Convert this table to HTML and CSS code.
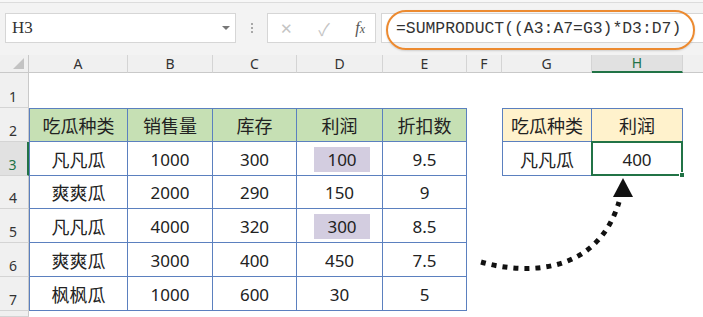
FILE: index.html
```html
<!DOCTYPE html>
<html lang="zh">
<head>
<meta charset="utf-8">
<link rel="stylesheet" href="styles.css">
</head>
<body>
<div class="app">
  <div class="topline"></div>
  <div class="toolbar">
    <div class="namebox"><span class="nb-text">H3</span><span class="nb-arrow"></span></div>
    <div class="grip"><i></i><i></i><i></i></div>
    <div class="btnbox">
      <span class="btn x">✕</span>
      <span class="btn ok">✓</span>
      <span class="btn fx"><i>f</i><i class="sx">x</i></span>
    </div>
    <div class="formula">=SUMPRODUCT((A3:A7=G3)*D3:D7)</div>
  </div>
  <div class="oval"></div>

  <div class="sheet">
    <!-- column headers -->
    <div class="corner"><span class="tri"></span></div>
    <div class="ch">A</div><div class="ch">B</div><div class="ch">C</div><div class="ch">D</div><div class="ch">E</div><div class="ch">F</div><div class="ch">G</div><div class="ch sel">H</div><div class="ch last"></div>

    <!-- row 1 -->
    <div class="rh">1</div>
    <div class="c"></div><div class="c"></div><div class="c"></div><div class="c"></div><div class="c"></div><div class="c"></div><div class="c"></div><div class="c"></div><div class="c"></div>

    <!-- row 2 -->
    <div class="rh">2</div>
    <div class="c t tt tl hg">吃瓜种类</div><div class="c t tt hg">销售量</div><div class="c t tt hg">库存</div><div class="c t tt hg">利润</div><div class="c t tt hg">折扣数</div>
    <div class="c"></div>
    <div class="c t tt tl hy">吃瓜种类</div><div class="c t tt hy">利润</div>
    <div class="c"></div>

    <!-- row 3 -->
    <div class="rh sel">3</div>
    <div class="c t tl">凡凡瓜</div><div class="c t num">1000</div><div class="c t num">300</div><div class="c t num"><span class="hl">100</span></div><div class="c t num">9.5</div>
    <div class="c"></div>
    <div class="c t tl">凡凡瓜</div><div class="c t num active">400<span class="handle"></span></div>
    <div class="c"></div>

    <!-- row 4 -->
    <div class="rh">4</div>
    <div class="c t tl">爽爽瓜</div><div class="c t num">2000</div><div class="c t num">290</div><div class="c t num">150</div><div class="c t num">9</div>
    <div class="c"></div><div class="c"></div><div class="c"></div><div class="c"></div>

    <!-- row 5 -->
    <div class="rh">5</div>
    <div class="c t tl">凡凡瓜</div><div class="c t num">4000</div><div class="c t num">320</div><div class="c t num"><span class="hl hl2">300</span></div><div class="c t num">8.5</div>
    <div class="c"></div><div class="c"></div><div class="c"></div><div class="c"></div>

    <!-- row 6 -->
    <div class="rh">6</div>
    <div class="c t tl">爽爽瓜</div><div class="c t num">3000</div><div class="c t num">400</div><div class="c t num">450</div><div class="c t num">7.5</div>
    <div class="c"></div><div class="c"></div><div class="c"></div><div class="c"></div>

    <!-- row 7 -->
    <div class="rh">7</div>
    <div class="c t tl">枫枫瓜</div><div class="c t num">1000</div><div class="c t num">600</div><div class="c t num">30</div><div class="c t num">5</div>
    <div class="c"></div><div class="c"></div><div class="c"></div><div class="c"></div>

    <!-- row 8 (partial) -->
    <div class="rh"></div>
    <div class="c"></div><div class="c"></div><div class="c"></div><div class="c"></div><div class="c"></div><div class="c"></div><div class="c"></div><div class="c"></div><div class="c"></div>
  </div>

  <svg class="arrow" width="703" height="317" viewBox="0 0 703 317">
    <path d="M481 262 C 530 276 598 272 619 202" fill="none" stroke="#111" stroke-width="5" stroke-dasharray="5 6"/>
    <polygon points="623,178 613,197 633,197" fill="#111"/>
  </svg>
</div>
</body>
</html>
```

FILE: styles.css
```css
* { box-sizing: border-box; }
html, body { margin: 0; padding: 0; }
body {
  width: 703px;
  height: 317px;
  overflow: hidden;
  background: #fff;
  font-family: "Noto Sans", "Noto Sans CJK SC", sans-serif;
  color: #222;
}
.app {
  position: relative;
  width: 703px;
  height: 317px;
  overflow: hidden;
}
.topline {
  height: 3px;
  background: #f7f7f7;
  border-bottom: 1px solid #dcdcdc;
}
.toolbar {
  height: 52px;
  background: #f3f3f3;
  display: flex;
  align-items: flex-start;
  padding-top: 10px;
  padding-left: 5px;
}
.namebox {
  width: 231px;
  height: 30px;
  background: #fff;
  border: 1px solid #d6d6d6;
  display: flex;
  align-items: center;
  justify-content: space-between;
  padding: 0 5px 0 6px;
}
.nb-text {
  font-family: "Liberation Serif", serif;
  font-size: 17px;
  color: #333;
}
.nb-arrow {
  width: 0; height: 0;
  border-left: 4px solid transparent;
  border-right: 4px solid transparent;
  border-top: 4px solid #777;
}
.grip {
  width: 31px;
  height: 30px;
  display: flex;
  flex-direction: column;
  align-items: center;
  justify-content: center;
  gap: 2px;
}
.grip i {
  width: 2px; height: 2px;
  background: #a8a8a8;
  display: block;
}
.btnbox {
  width: 109px;
  height: 30px;
  background: #fff;
  border: 1px solid #d6d6d6;
  display: flex;
  align-items: center;
  padding: 0 8px 0 12px;
  justify-content: space-between;
}
.btn { font-size: 16px; color: #c4c4c4; }
.btn.x { font-size: 15px; }
.btn.ok { font-size: 17px; }
.btn.fx {
  font-family: "Liberation Serif", serif;
  font-style: italic;
  color: #555;
  font-size: 16px;
  padding-right: 2px;
}
.btn.fx .sx { font-size: 12px; }
.formula {
  margin-left: 5px;
  flex: 1;
  height: 30px;
  background: #fff;
  border: 1px solid #d6d6d6;
  border-right: none;
  font-family: "Liberation Mono", monospace;
  font-size: 16.4px;
  color: #333;
  display: flex;
  align-items: center;
  padding-left: 14px;
  white-space: nowrap;
}
.oval {
  position: absolute;
  left: 386px;
  top: 10px;
  width: 309px;
  height: 40px;
  border: 2px solid #ec8a30;
  border-radius: 20px;
  box-shadow: 0 1px 2px rgba(0,0,0,0.15);
}

.sheet {
  display: grid;
  grid-template-columns: 29px 99px 85px 84px 86px 84px 35px 90px 91px 1fr;
  grid-template-rows: 18px 35px 34px 34px 33px 34px 34px 34px 1fr;
  height: 262px;
}
.corner {
  background: #f0f0f0;
  border-right: 1px solid #c9c9c9;
  border-bottom: 1px solid #c9c9c9;
  position: relative;
}
.tri {
  position: absolute;
  right: 4px;
  bottom: 3px;
  width: 0; height: 0;
  border-left: 11px solid transparent;
  border-bottom: 11px solid #c3c3c3;
}
.ch {
  background: #f0f0f0;
  border-right: 1px solid #d4d4d4;
  border-bottom: 1px solid #c9c9c9;
  display: flex;
  align-items: flex-end;
  justify-content: center;
  font-size: 14px;
  line-height: 16px;
  color: #333;
}
.ch.last { border-right: none; }
.ch.sel {
  background: #e1e1e1;
  color: #217346;
  border-bottom: 2px solid #217346;
}
.rh {
  background: #f0f0f0;
  border-right: 1px solid #c9c9c9;
  border-bottom: 1px solid #d4d4d4;
  display: flex;
  align-items: flex-end;
  justify-content: center;
  padding-right: 2px;
  padding-bottom: 1px;
  font-size: 14px;
  line-height: 18px;
  color: #333;
}
.rh.sel {
  background: #e1e1e1;
  color: #217346;
  border-right: 2px solid #217346;
}
.c {
  display: flex;
  align-items: center;
  justify-content: center;
  font-size: 18px;
  font-family: "Noto Sans CJK SC", sans-serif;
  color: #222;
  position: relative;
}
.c.num {
  font-family: "Noto Sans", sans-serif;
  font-size: 17px;
  padding-top: 1px;
}
.t {
  border-right: 1px solid #5b80bf;
  border-bottom: 1px solid #5b80bf;
}
.tt { border-top: 1px solid #5b80bf; }
.tl { border-left: 1px solid #5b80bf; }
.hg { background: #c6e0b4; }
.hy { background: #fff2cc; }
.hl {
  display: flex;
  align-items: center;
  justify-content: center;
  width: 56px;
  height: 25px;
  margin-left: 5px;
  background: #d3cde0;
}
.hl2 { margin-top: 1px; }
.active {
  border: 2px solid #217346;
  margin: -1px 0 0 -1px;
}
.handle {
  position: absolute;
  right: -4px;
  bottom: -4px;
  width: 6px;
  height: 6px;
  background: #217346;
  border: 1px solid #fff;
}
.arrow {
  position: absolute;
  left: 0;
  top: 0;
  pointer-events: none;
}
```
